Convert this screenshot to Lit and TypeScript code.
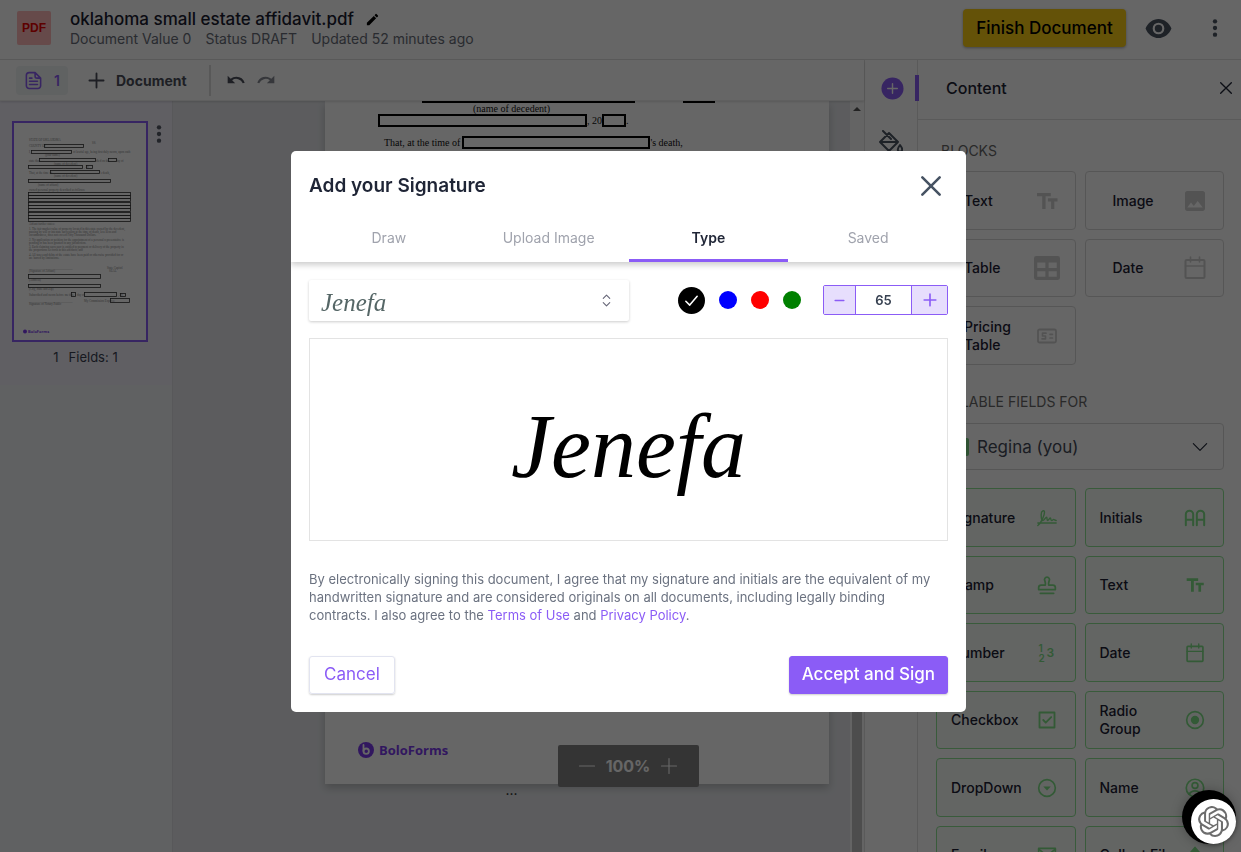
import { LitElement, html, svg, css, nothing } from "lit";
import { customElement, state } from "lit/decorators.js";

const icon = (name: string, size = 24, cls = "") => html`
  <svg class=${cls} width=${size} height=${size} viewBox="0 0 24 24" fill="none" stroke="currentColor"
    stroke-width="2" stroke-linecap="round" stroke-linejoin="round" aria-hidden="true">${ICONS[name]}</svg>`;

const ICONS: Record<string, unknown> = {
  pencil: svg`<path fill="currentColor" stroke="none" d="M3 17.2V21h3.8L17.8 9.9l-3.7-3.7zM20.7 7c.4-.4.4-1 0-1.4l-2.3-2.3a1 1 0 0 0-1.4 0l-1.8 1.8 3.7 3.7z"/>`,
  eye: svg`<path fill="currentColor" stroke="none" fill-rule="evenodd" d="M12 3.5C7 3.5 2.4 6.9.5 12c1.900 5.100 6.500 8.500 11.500 8.500s9.600-3.400 11.500-8.500C21.600 6.900 17 3.500 12 3.500zM12 17.200a5.200 5.200 0 1 1 0-10.400 5.200 5.200 0 0 1 0 10.400zm0-1.900a3.300 3.300 0 1 0 0-6.600 3.300 3.300 0 0 0 0 6.600z"/>`,
  dots: svg`<g fill="currentColor" stroke="none"><circle cx="12" cy="4" r="2.600"/><circle cx="12" cy="12" r="2.600"/><circle cx="12" cy="20" r="2.600"/></g>`,
  page: svg`<path d="M14 2H6.500A3.500 3.500 0 0 0 3 5.500v13A3.500 3.500 0 0 0 6.500 22h11a3.500 3.500 0 0 0 3.500-3.500V9zM14 2v4.500A2.500 2.500 0 0 0 16.500 9H21M7 9h3M7 13h10M7 17h10"/>`,
  plus: svg`<path d="M12 2v20M2 12h20" stroke-width="2.600"/>`,
  thinplus: svg`<path d="M12 2v20M2 12h20" stroke-width="1.500"/>`,
  thinminus: svg`<path d="M2 12h20" stroke-width="1.500"/>`,
  minus: svg`<path d="M4 12h16" stroke-width="2.800"/>`,
  stepplus: svg`<path d="M12 2v20M2 12h20" stroke-width="2.800"/>`,
  undo: svg`<path fill="currentColor" stroke="none" d="M12.500 8c-2.650 0-5.050 1-6.900 2.600L2 7v9h9l-3.620-3.620A8.200 8.200 0 0 1 20.100 16l2.370-.780A10.500 10.500 0 0 0 12.500 8z"/>`,
  redo: svg`<path fill="currentColor" stroke="none" d="M18.400 10.600A10.500 10.500 0 0 0 1.540 15.220L3.900 16a8.200 8.200 0 0 1 12.720-3.620L13 16h9V7z"/>`,
  close: svg`<path d="M4 4l16 16M20 4L4 20"/>`,
  closebold: svg`<path d="M4 4l16 16M20 4L4 20" stroke-width="2.400"/>`,
  addcircle: svg`<circle cx="12" cy="12" r="11.500" fill="currentColor" stroke="none"/><path d="M12 7v10M7 12h10" stroke="#fff" stroke-width="1.500"/>`,
  bucket: svg`<path d="M4 1l8 8M10 3l9 9-9 9-9-9zM1 12h18M21 15c1.500 2 2.200 3.300 2.200 4.400a2.200 2.200 0 0 1-4.400 0c0-1.100.700-2.400 2.200-4.400z"/>`,
  tt: svg`<path fill="currentColor" stroke="none" d="M2 4v3.300h5.200V20h3.400V7.300h5.200V4zm20.500 5.200h-9.600v3.200h3.200V20h3.200v-7.600h3.200z"/>`,
  image: svg`<path fill="currentColor" stroke="none" fill-rule="evenodd" d="M22 19.800V4.200C22 3 21 2 19.800 2H4.200C3 2 2 3 2 4.200v15.600C2 21 3 22 4.200 22h15.600c1.200 0 2.200-1 2.200-2.200zM8 13.500l2.800 3.400 3.900-5 5 6.700H4.300z"/>`,
  table: svg`<path fill="currentColor" stroke="none" fill-rule="evenodd" d="M2 1h20a2 2 0 0 1 2 2v18a2 2 0 0 1-2 2H2a2 2 0 0 1-2-2V3a2 2 0 0 1 2-2zM3 7v5h7.500V7zm10.500 0v5H21V7zM3 15v5h7.500v-5zm10.500 0v5H21v-5z"/>`,
  calendar: svg`<rect x="2.500" y="4" width="19" height="18" rx="1"/><path d="M2.500 10h19M7.500 1v5M16.500 1v5" stroke-width="1.600"/>`,
  price: svg`<rect x="3" y="5.500" width="18" height="13" rx="1.500" stroke-width="1.800"/><path d="M11 9.200H7.500v2.800h3v2.800H7M15 10.300h2.500M15 14h2.500" stroke-width="1.700"/>`,
  signature: svg`<path d="M1 21c4-3 8-12 8-16 0-3-4-2-4 3 0 4 .500 7 2 7 2 0 3-4 4.500-4 1 0 0 4 1.200 4S15 12 16 12s0 3 1.500 3 1.500-1.300 2.500-1.300 1 1.300 3 1.300M1 18h22" stroke-width="1.700"/>`,
  initials: svg`<path d="M2 20V8a4 4 0 0 1 8 0v12M2 14h8M14 20V8a4 4 0 0 1 8 0v12M14 14h8" stroke-width="2.200"/>`,
  stamp: svg`<path d="M10 12c.500-2 0-3-.600-5a3 3 0 1 1 5.200 0c-.600 2-1.100 3-.600 5h5a3 3 0 0 1 3 3v2.500H2V15a3 3 0 0 1 3-3zM4 22h16" stroke-width="2.100"/>`,
  check: svg`<rect x="3" y="3" width="18" height="18" stroke-width="2.200"/><path d="M7.500 12l3 3.200L17 8.500" stroke-width="2.200"/>`,
  radio: svg`<circle cx="12" cy="12" r="10"/><circle cx="12" cy="12" r="5" fill="currentColor" stroke="none"/>`,
  drop: svg`<circle cx="12" cy="12" r="10"/><path d="M7.500 10.300h9L12 15z" fill="currentColor" stroke="none"/>`,
  user: svg`<circle cx="12" cy="12" r="10.500"/><circle cx="12" cy="9" r="3.500"/><path d="M5 19.500c1.500-2.600 4-4 7-4s5.500 1.400 7 4"/>`,
  mail: svg`<rect x="2" y="4" width="20" height="16"/><path d="M2 5l10 8 10-8"/>`,
  upload: svg`<path fill="currentColor" d="M12 3l6 7h-3.500v7h-5v-7H6z"/><path d="M4 21h16"/>`,
  chevron: svg`<path d="M2 7l10 10L22 7" stroke-width="1.700"/>`,
  updown: svg`<path d="M6 8l6-6 6 6M6 16l6 6 6-6" stroke-width="2"/>`,
  tick: svg`<path d="M4 13l5.500 5.500L20 6" stroke-width="2.200"/>`,
};

const BLOCKS = [
  { label: "Text", icon: "tt" },
  { label: "Image", icon: "image" },
  { label: "Table", icon: "table", size: 26 },
  { label: "Date", icon: "calendar" },
  { label: "Pricing Table", icon: "price" },
];

const FIELDS = [
  { label: "Signature", icon: "signature" },
  { label: "Initials", icon: "initials", size: 22 },
  { label: "Stamp", icon: "stamp" },
  { label: "Text", icon: "tt" },
  { label: "Number", icon: "digits" },
  { label: "Date", icon: "calendar" },
  { label: "Checkbox", icon: "check" },
  { label: "Radio Group", icon: "radio" },
  { label: "DropDown", icon: "drop" },
  { label: "Name", icon: "user" },
  { label: "Email", icon: "mail" },
  { label: "Collect File", icon: "upload" },
];

// Preview page: boxes to fill in as [x, y, width, height], then the printed lines as [x, y, text].
const THUMB_BOXES = [
  [44, 144, 39, 3], [31, 150, 40, 3], [39, 158, 56, 3], [108, 158, 8, 3], [28, 165, 54, 3], [86, 165, 6, 3],
  [50, 170, 49, 3], [28, 179, 82, 3], [28, 284, 72, 3], [28, 274, 72, 4], [71, 292, 4, 4],
  [84, 292, 32, 4], [120, 293, 5, 3], [110, 298, 19, 4],
  ...[192, 195, 198, 202, 205, 208, 212, 215, 218].map((y) => [28, y, 102, 3]),
];

const THUMB_LINES: [number, number, string][] = [
  [29, 141, "STATE OF OKLAHOMA"], [29, 147, "COUNTY OF"], [92, 144, "SS."], [29, 153, "I,"],
  [73, 153, "of lawful age, being first duly sworn, upon oath"], [45, 156, "(your name)"], [29, 162, "state that"],
  [96, 162, "died on the"], [116, 162, "day of"], [54, 165, "(name of decedent)"], [84, 168, ", 20"],
  [29, 174, "That, at the time of"], [100, 174, "'s death,"], [54, 177, "(name of decedent)"], [38, 186, "(name of affiant)"],
  [29, 191, "owned personal property described as follows:"], [29, 225, "Affiant further states:"],
  [29, 230, "1. The fair market value of property located in this state owned by the decedent,"],
  [29, 233, "passing by will or intestate succession at the time of death, less liens and"],
  [29, 236, "encumbrances, does not exceed Fifty Thousand Dollars."],
  [29, 241, "2. No application or petition for the appointment of a personal representative is"],
  [29, 244, "pending or has been granted in any jurisdiction."],
  [29, 248, "3. Each claiming successor is entitled to payment or delivery of the property in"],
  [29, 251, "the proportions set forth in this affidavit; and"],
  [29, 256, "4. All taxes and debts of the estate have been paid or otherwise provided for or"],
  [29, 259, "are barred by limitations."], [29, 269, "_____________________________"], [29, 272, "(Signature of Affiant)"], [107, 269, "State Capitol"],
  [109, 272, "SEAL"], [29, 281, "(Address)"], [29, 290, "(City, State and Zip)"], [29, 296, "Subscribed and sworn before me this"],
  [77, 296, "day of"], [118, 296, ", 20"], [84, 302, "My Commission Expires:"], [29, 302, "_____________________________"],
  [29, 305, "Signature of Notary Public"],
];

const KNOT =
  "M22.2819 9.8211a5.9847 5.9847 0 0 0-.5157-4.9108 6.0462 6.0462 0 0 0-6.5098-2.9A6.0651 6.0651 0 0 0 4.9807 4.1818a5.9847 5.9847 0 0 0-3.9977 2.9 6.0462 6.0462 0 0 0 .7427 7.0966 5.98 5.98 0 0 0 .511 4.9107 6.051 6.051 0 0 0 6.5146 2.9001A5.9847 5.9847 0 0 0 13.2599 24a6.0557 6.0557 0 0 0 5.7718-4.2058 5.9894 5.9894 0 0 0 3.9977-2.9001 6.0557 6.0557 0 0 0-.7475-7.0729zm-9.022 12.6081a4.4755 4.4755 0 0 1-2.8764-1.0408l.1419-.0804 4.7783-2.7582a.7948.7948 0 0 0 .3927-.6813v-6.7369l2.02 1.1686a.071.071 0 0 1 .038.052v5.5826a4.504 4.504 0 0 1-4.4945 4.4944zm-9.6607-4.1254a4.4708 4.4708 0 0 1-.5346-3.0137l.142.0852 4.783 2.7582a.7712.7712 0 0 0 .7806 0l5.8428-3.3685v2.3324a.0804.0804 0 0 1-.0332.0615L9.74 19.9502a4.4992 4.4992 0 0 1-6.1408-1.6464zM2.3408 7.8956a4.485 4.485 0 0 1 2.3655-1.9728V11.6a.7664.7664 0 0 0 .3879.6765l5.8144 3.3543-2.0201 1.1685a.0757.0757 0 0 1-.071 0l-4.8303-2.7865A4.504 4.504 0 0 1 2.3408 7.872zm16.5963 3.8558L13.1038 8.364 15.1192 7.2a.0757.0757 0 0 1 .071 0l4.8303 2.7913a4.4944 4.4944 0 0 1-.6765 8.1042v-5.6772a.79.79 0 0 0-.407-.667zm2.0107-3.0231l-.142-.0852-4.7735-2.7818a.7759.7759 0 0 0-.7854 0L9.409 9.2297V6.8974a.0662.0662 0 0 1 .0284-.0615l4.8303-2.7866a4.4992 4.4992 0 0 1 6.6802 4.66zM8.3065 12.863l-2.02-1.1638a.0804.0804 0 0 1-.038-.0567V6.0742a4.4992 4.4992 0 0 1 7.3757-3.4537l-.142.0805L8.704 5.459a.7948.7948 0 0 0-.3927.6813zm1.0976-2.3654l2.602-1.4998 2.6069 1.4998v2.9994l-2.5974 1.4997-2.6067-1.4997Z";

const shared = css`
  *, *::before, *::after { box-sizing: border-box; }
  button, select, input { font: inherit; color: inherit; margin: 0; padding: 0; border: 0; background: none; }
  select, input { appearance: none; outline: 0; }
  button { cursor: pointer; }
  svg { display: block; flex: none; }
  h1, h2, h3, p { margin: 0; }
`;

@customElement("editor-header")
class EditorHeader extends LitElement {
  static styles = [shared, css`
    :host { display: flex; align-items: center; height: 60px; padding: 0 17px 3px; border-bottom: 1px solid #e0e0e0; background: #fff; }
    .file { display: grid; place-items: center; width: 34px; height: 34px; margin-right: 19px; border-radius: 2px; background: #ffb9b9; color: #e80000; font: 700 12px/1 "Liberation Sans", sans-serif; }
    .meta { flex: 1; }
    .title { display: flex; align-items: center; gap: 11px; }
    h1 { font-size: 17px; line-height: 21px; font-weight: 500; color: #1b2030; }
    .sub { display: flex; gap: 14px; font-size: 14px; line-height: 18px; color: #686d78; }
    .finish { width: 163px; height: 38px; margin-right: 19px; border-radius: 4px; background: #facc15; color: #000; font-size: 17px; font-weight: 500; box-shadow: 0 1px 3px #0005; }
    .eye, .more { color: #4b5563; }
    .more { width: 24px; margin: 0 -3px 0 31px; }
    .more svg { margin: auto; }
  `];
  render() {
    return html`
      <span class="file">PDF</span>
      <div class="meta">
        <div class="title"><h1>oklahoma small estate affidavit.pdf</h1><button aria-label="Rename">${icon("pencil", 15)}</button></div>
        <div class="sub"><span>Document Value 0</span><span>Status DRAFT</span><span>Updated 52 minutes ago</span></div>
      </div>
      <button class="finish">Finish Document</button>
      <button class="eye" aria-label="Preview">${icon("eye", 27)}</button>
      <button class="more" aria-label="More">${icon("dots", 20)}</button>`;
  }
}

@customElement("document-area")
class DocumentArea extends LitElement {
  static styles = [shared, css`
    :host { display: flex; flex-direction: column; min-width: 0; min-height: 0; }
    .bar { position: relative; display: flex; align-items: center; height: 41px; padding: 0 16px; background: #fff; border-bottom: 1px solid #eee; color: #4b4f5a; z-index: 1; box-shadow: 0 1px 2px #0002; }
    .chip { display: flex; align-items: center; justify-content: center; gap: 11px; width: 52px; height: 29px; border-radius: 4px; background: #f1f4f5; color: #8b5cf6; font-size: 14px; font-weight: 600; }
    .add { display: flex; align-items: center; gap: 11px; margin: 0 22px 0 20px; font-size: 14px; font-weight: 700; }
    .hist { display: flex; gap: 10px; padding-left: 15px; height: 31px; align-items: center; border-left: 2px solid #dcdcdc; }
    .off { color: #888b93; }
    .stage { flex: 1; display: flex; min-height: 0; }
    .pages { flex: none; width: 173px; background: #f1f2f6; border-right: 1px solid #dcdde2; }
    .entry { display: grid; grid-template-columns: 136px 1fr; height: 284px; padding: 20px 3px 0 12px; background: #efedf8; align-content: start; }
    .thumb { height: 221px; border: 2px solid #8b5cf6; background: #fff; }
    .thumb svg { width: 100%; height: 100%; }
    .kebab { height: 26px; color: #555a66; }
    .kebab svg { margin: auto; }
    .cap { display: flex; gap: 10px; justify-content: center; padding: 5px 0 0 11px; font-size: 13px; line-height: 20px; color: #3a3f50; }
    .canvas { flex: 1; position: relative; min-width: 0; background: #e5e7eb; overflow: hidden; }
    .paper { display: flex; flex-direction: column; width: 504px; height: 683px; margin-left: auto; margin-right: 21px; background: #fff; box-shadow: 0 4px 8px #0003; font: 10px/11px "Liberation Serif", serif; color: #111; }
    .row { display: flex; align-items: center; }
    .cut { height: 2px; padding-left: 97px; gap: 48px; }
    .cut i { height: 2px; background: #000; }
    .long { width: 213px; }
    .short { width: 32px; }
    .name { padding-left: 148px; }
    .box { height: 13px; border: 2px solid #000; }
    .first { padding: 0 0 9px 53px; }
    .first .a { width: 209px; }
    .first .b { width: 24px; }
    .second { padding-left: 59px; }
    .second .a { width: 188px; margin-left: 2px; }
    .brand { display: flex; align-items: center; gap: 5px; margin: auto 0 26px 33px; color: #7c3aed; font: 700 13px/16px "Open Sans", sans-serif; }
    .dots { text-align: center; font-size: 14px; line-height: 12px; color: #222; }
    .zoom { position: absolute; left: calc(50% + 46px); top: 644px; display: flex; align-items: center; gap: 10px; width: 141px; height: 42px; justify-content: center; border-radius: 2px; background: #838383; color: #fff; font-size: 16px; font-weight: 700; }
    .scroll { width: 14px; background: #fafafa; display: flex; flex-direction: column; align-items: center; }
    .scroll .up { margin-top: 6px; border: 4px solid transparent; border-top: 0; border-bottom: 4px solid #555; }
    .scroll .thumbbar { width: 10px; margin-top: 60px; flex: 1; background: #c1c1c1; }
  `];
  render() {
    return html`
      <div class="bar">
        <button class="chip">${icon("page", 19)}<span>1</span></button>
        <button class="add">${icon("plus", 17)}<span>Document</span></button>
        <div class="hist">
          <button aria-label="Undo">${icon("undo", 20)}</button>
          <button class="off" aria-label="Redo">${icon("redo", 20)}</button>
        </div>
      </div>
      <div class="stage">
        <aside class="pages">
          <div class="entry">
            <button class="thumb" aria-label="Page 1">
              <svg viewBox="14 123 132 217" font-family="Liberation Serif, serif" font-size="3" fill="#888">
                ${THUMB_LINES.map(([x, y, t]) => svg`<text x=${x} y=${y}>${t}</text>`)}
                ${THUMB_BOXES.map(([x, y, w, h]) => svg`<rect x=${x + 0.5} y=${y + 0.5} width=${w} height=${h} fill="none" stroke="#333" stroke-width=".8"/>`)}
                <circle cx="25" cy="331.500" r="2" fill="#7c3aed"/>
                <text x="28" y="333" font-family="Open Sans" font-weight="700" font-size="4" fill="#7c3aed">BoloForms</text>
              </svg>
            </button>
            <button class="kebab" aria-label="Page menu">${icon("dots", 20)}</button>
            <div class="cap"><span>1</span><span>Fields: 1</span></div>
          </div>
        </aside>
        <div class="canvas">
          <div class="paper">
            <div class="row cut"><i class="long"></i><i class="short"></i></div>
            <div class="name">(name of decedent)</div>
            <div class="row first"><span class="box a"></span>, 20<span class="box b"></span>.</div>
            <div class="row second">That, at the time of<span class="box a"></span>'s death,</div>
            <div class="brand">
              <svg width="16" height="16" viewBox="0 0 16 16"><circle cx="8" cy="8" r="8" fill="currentColor"/><path d="M5.500 3v6" stroke="#fff" stroke-width="1.800" stroke-linecap="round"/><circle cx="8.200" cy="9.200" r="2.700" fill="none" stroke="#fff" stroke-width="1.800"/></svg>
              <span>BoloForms</span>
            </div>
          </div>
          <div class="dots">...</div>
          <div class="zoom">
            <button aria-label="Zoom out">${icon("thinminus", 18)}</button><span>100%</span><button aria-label="Zoom in">${icon("thinplus", 18)}</button>
          </div>
        </div>
        <div class="scroll"><span class="up"></span><span class="thumbbar"></span></div>
      </div>`;
  }
}

@customElement("content-panel")
class ContentPanel extends LitElement {
  static styles = [shared, css`
    :host { display: grid; grid-template-columns: 54px 1fr; min-height: 0; background: #fff; }
    .rail { display: flex; flex-direction: column; align-items: stretch; gap: 16px; padding-top: 15px; border-left: 1px solid #e2e2e2; border-right: 1px solid #e2e2e2; color: #4b5563; }
    .rail button { height: 26px; margin-bottom: 12px; display: grid; place-items: center; }
    .rail .on { color: #8b5cf6; border-right: 4px solid #8b5cf6; margin-right: -2px; padding-left: 4px; }
    .panel { min-width: 0; overflow: hidden; }
    .head { display: flex; justify-content: space-between; align-items: center; height: 60px; padding: 0 7px 3px 28px; border-bottom: 1px solid #e2e2e2; color: #1f2536; }
    h2 { font-size: 16px; font-weight: 500; }
    .body { padding: 19px 17px 0 18px; }
    h3 { padding-left: 5px; font-size: 14px; line-height: 24px; font-weight: 400; color: #686868; }
    .grid { display: grid; grid-template-columns: 1fr 1fr; grid-auto-rows: 59px 58px; gap: 9px; margin: 8px 0 25px; }
    .grid button { display: flex; align-items: center; justify-content: space-between; padding: 0 15px 0 27px; border: 1px solid #d8d8d8; border-radius: 4px; text-align: left; font-size: 14px; line-height: 18px; font-weight: 500; color: #1c2033; }
    .txt { max-width: 76px; }
    .ic { display: grid; place-items: center; flex: none; width: 26px; height: 26px; color: #d0d0d0; }
    .grid.fields { margin-top: 18px; }
    .fields button { padding: 0 15px 0 14px; border-color: #8ee495; background: #f7fdf7; }
    .fields .ic { color: #80e088; }
    .digits { display: grid; grid-template-columns: 8px 8px; align-items: center; font-size: 10px; line-height: 10px; }
    .digits b { font-weight: 600; }
    .digits b:nth-child(1) { grid-area: 1 / 1; }
    .digits b:nth-child(2) { grid-area: 2 / 1; }
    .digits b:nth-child(3) { grid-area: 1 / 2 / 3 / 3; font-size: 12px; }
    .who { display: flex; align-items: center; height: 47px; margin-top: 9px; padding: 0 15px 0 16px; border: 1px solid #d8d8d8; border-radius: 4px; color: #1f2536; }
    .who .tag { width: 16px; height: 18px; border-radius: 2px; background: #77cc80; }
    .who select { flex: 1; min-width: 0; height: 100%; padding-left: 8px; font-size: 17px; line-height: 24px; color: #444a58; }
  `];
  private card(b: { label: string; icon: string; size?: number }, size: number) {
    return html`<button><span class="txt">${b.label}</span><span class="ic">${b.icon === "digits"
      ? html`<span class="digits" aria-hidden="true"><b>1</b><b>2</b><b>3</b></span>`
      : icon(b.icon, b.size ?? size)}</span></button>`;
  }
  render() {
    return html`
      <nav class="rail">
        <button class="on" aria-label="Content">${icon("addcircle", 23)}</button>
        <button aria-label="Design">${icon("bucket", 24)}</button>
      </nav>
      <section class="panel">
        <div class="head"><h2>Content</h2><button aria-label="Close panel">${icon("close", 16)}</button></div>
        <div class="body">
          <h3>BLOCKS</h3>
          <div class="grid">${BLOCKS.map((b) => this.card(b, 24))}</div>
          <h3>FILLABLE FIELDS FOR</h3>
          <label class="who">
            <span class="tag"></span>
            <select aria-label="Recipient"><option>Regina (you)</option></select>${icon("chevron", 16)}
          </label>
          <div class="grid fields">${FIELDS.map((b) => this.card(b, 20))}</div>
        </div>
      </section>`;
  }
}

@customElement("signature-dialog")
class SignatureDialog extends LitElement {
  @state() private color = "black";
  @state() private size = 65;
  @state() private tab = "Type";
  static styles = [shared, css`
    :host { display: block; width: 675px; max-width: 100%; border-radius: 5px; background: #fff; overflow: hidden; color: #1f2536; }
    .top { padding: 0 18px; box-shadow: 0 3px 6px #0003; }
    .head { display: flex; justify-content: space-between; align-items: center; padding: 22px 4px 0 0; height: 48px; }
    h2 { font-size: 19px; line-height: 26px; font-weight: 600; }
    .head button { color: #475363; }
    .tabs { display: grid; grid-template-columns: repeat(4, 1fr); height: 63px; padding-top: 16px; }
    .tabs button { font-size: 14px; color: #a0a3ad; border-bottom: 3px solid transparent; }
    .tabs .on { color: #1f2536; font-weight: 600; border-color: #8b5cf6; }
    .body { padding: 17px 18px 18px; }
    .opts { display: flex; align-items: center; height: 42px; }
    .face { position: relative; display: flex; align-items: center; width: 50%; height: 41px; margin-right: auto; border-radius: 2px; box-shadow: 0 1px 3px #0003; color: #667; }
    .face select { width: 100%; height: 100%; padding: 6px 12px 0; font: italic 25px/30px "Liberation Serif", serif; color: #566; }
    .face svg { position: absolute; right: 16px; pointer-events: none; }
    .inks { display: flex; align-items: center; gap: 14px; margin-right: 22px; border: 0; padding: 0; }
    .inks label { display: grid; place-items: center; color: #fff; }
    .inks input { width: 18px; height: 18px; border-radius: 50%; background: var(--ink); cursor: pointer; grid-area: 1 / 1; }
    .inks input:checked { width: 27px; height: 27px; }
    .inks svg { grid-area: 1 / 1; z-index: 1; pointer-events: none; }
    .step { display: grid; grid-template-columns: 31px 57px 35px; width: 125px; height: 30px; border: 1px solid #8b5cf6; border-radius: 2px; }
    .step button { display: grid; place-items: center; background: #e7defd; color: #8b5cf6; }
    .step input { width: 100%; min-width: 0; text-align: center; font-size: 13px; font-weight: 600; border: solid #8b5cf6; border-width: 0 1px; color: #374151; }
    .pad { display: grid; place-items: center; height: 203px; margin: 17px 0 29px; border: 1px solid #e3e3e3; padding-top: 14px; font: italic 90px/100px "Liberation Serif", serif; color: #000; }
    .legal { font-size: 13px; line-height: 18px; color: #6b7280; }
    a { color: #8b5cf6; text-decoration: none; }
    .acts { display: flex; justify-content: space-between; margin-top: 32px; }
    .acts button { height: 38px; padding: 0 14px 2px; border: 1px solid #e2e4f0; border-radius: 3px; font-size: 17px; color: #8b5cf6; box-shadow: 0 1px 2px #0003; }
    .acts .go { padding: 0 12px 2px; border-color: #8b5cf6; background: #8b5cf6; color: #fff; font-weight: 500; }
  `];
  render() {
    return html`
      <div class="top">
        <div class="head"><h2>Add your Signature</h2><button aria-label="Close">${icon("closebold", 26)}</button></div>
        <div class="tabs" role="tablist">
          ${["Draw", "Upload Image", "Type", "Saved"].map((t) => html`
            <button role="tab" aria-selected=${t === this.tab} class=${t === this.tab ? "on" : ""} @click=${() => (this.tab = t)}>${t}</button>`)}
        </div>
      </div>
      <div class="body">
        <div class="opts">
          <label class="face"><select aria-label="Signature style"><option>Jenefa</option></select>${icon("updown", 13)}</label>
          <fieldset class="inks" aria-label="Ink colour">
            ${["black", "blue", "red", "green"].map((c) => html`
              <label style=${`--ink:${c}`}>
                <input type="radio" name="ink" aria-label=${c} .checked=${c === this.color} @change=${() => (this.color = c)}>
                ${c === this.color ? icon("tick", 17) : nothing}</label>`)}
          </fieldset>
          <div class="step">
            <button aria-label="Smaller" @click=${() => this.size--}>${icon("minus", 13)}</button>
            <input aria-label="Signature size" .value=${String(this.size)}>
            <button aria-label="Larger" @click=${() => this.size++}>${icon("stepplus", 14)}</button>
          </div>
        </div>
        <div class="pad">Jenefa</div>
        <p class="legal">By electronically signing this document, I agree that my signature and initials are the equivalent of my handwritten signature and are considered originals on all documents, including legally binding contracts. I also agree to the <a href="#terms">Terms of Use</a> and <a href="#privacy">Privacy Policy</a>.</p>
        <div class="acts"><button>Cancel</button><button class="go">Accept and Sign</button></div>
      </div>`;
  }
}

@customElement("app-root")
class AppRoot extends LitElement {
  static styles = [shared, css`
    :host { display: flex; flex-direction: column; height: 100vh; overflow: hidden; background: #fff; font-family: Inter, sans-serif; }
    .work { flex: 1; display: grid; grid-template-columns: minmax(0, 1fr) 377px; min-height: 0; }
    .shade { position: fixed; inset: 0; z-index: 10; display: flex; align-items: center; justify-content: center; padding: 11px 0 0 16px; background: rgba(0, 0, 0, 0.6); }
    .help { position: fixed; z-index: 11; right: 5px; bottom: 8px; width: 54px; height: 54px; border-radius: 50%; background: #000; display: flex; align-items: end; justify-content: end; box-shadow: 0 0 12px #0004; }
    .help span { display: grid; place-items: center; width: 45px; height: 45px; border-radius: 50%; background: #fff; color: #6d6d6d; box-shadow: 0 1px 4px #0006; }
  `];
  render() {
    return html`
      <editor-header></editor-header>
      <div class="work"><document-area></document-area><content-panel></content-panel></div>
      <div class="shade"><signature-dialog role="dialog" aria-label="Add your Signature"></signature-dialog></div>
      <button class="help" aria-label="Assistant"><span><svg width="31" height="31" viewBox="0 0 24 24" fill="currentColor"><path d=${KNOT}/></svg></span></button>`;
  }
}
